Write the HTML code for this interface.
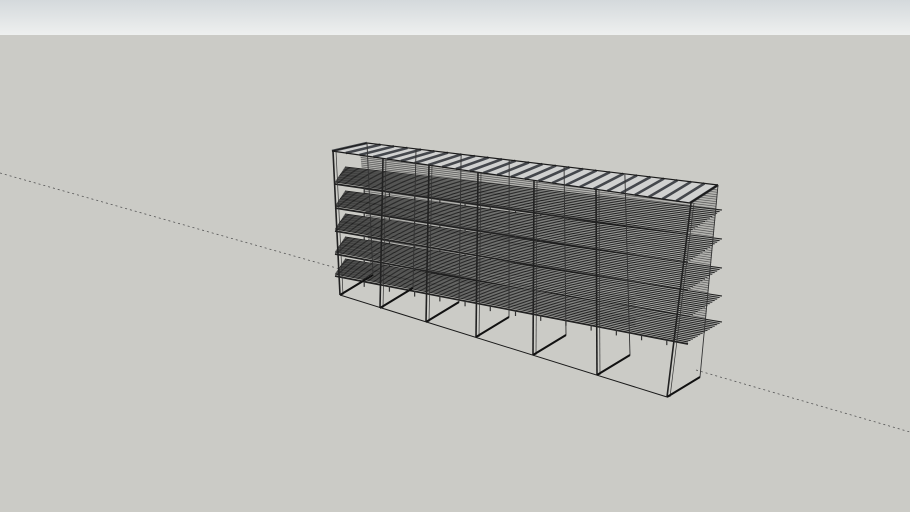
<!DOCTYPE html>
<html><head><meta charset="utf-8"><style>
html,body{margin:0;padding:0;width:910px;height:512px;overflow:hidden;background:#cbcbc6}
svg{display:block}
</style></head><body>
<svg id="s" width="910" height="512" viewBox="0 0 910 512" xmlns="http://www.w3.org/2000/svg">
<defs><linearGradient id="sky" x1="0" y1="0" x2="0" y2="1"><stop offset="0" stop-color="#d4d9dc"/><stop offset="1" stop-color="#eef0ef"/></linearGradient></defs>
<rect x="0" y="0" width="910" height="35" fill="url(#sky)"/>
<rect x="0" y="35" width="910" height="477" fill="#cbcbc6"/>
<line x1="0" y1="173" x2="340" y2="269" stroke="#555" stroke-width="0.8" stroke-dasharray="2,3"/>
<line x1="696" y1="370" x2="910" y2="432" stroke="#555" stroke-width="0.8" stroke-dasharray="2,3"/>
<g id="g" fill="none" stroke="#1a1a1a" stroke-width="0.8"></g>
</svg>
<script>
var g=document.getElementById('g'),NS='http://www.w3.org/2000/svg';
function L(x1,y1,x2,y2,w,c){var e=document.createElementNS(NS,'line');e.setAttribute('x1',x1);e.setAttribute('y1',y1);e.setAttribute('x2',x2);e.setAttribute('y2',y2);if(w)e.setAttribute('stroke-width',w);if(c)e.setAttribute('stroke',c);g.appendChild(e);}
function P(pts,f){var e=document.createElementNS(NS,'polygon');e.setAttribute('points',pts);e.setAttribute('fill',f);e.setAttribute('stroke','none');g.appendChild(e);}
function lerp(a,b,t){return a+(b-a)*t}
P("360,150 718,190 705,330 370,262","#b4b4b0");
for(var i=0;i<=60;i++){var t=i/60;L(lerp(360,370,t),lerp(150,262,t),lerp(718,705,t),lerp(190,330,t),0.7,'#555');}
P("332,151 367,143 718,185 690,203","#d0d1d0");
for(var i=0;i<=26;i++){var t=i/26;var fx=lerp(332,690,t),fy=lerp(151,203,t),bx=lerp(367,718,t),by=lerp(143,185,t);L(fx,fy,bx,by,2.6,'#44474c');}
L(332,151,690,203,1.2);L(367,143,718,185,1.2);L(332,151,367,143,1);L(690,203,718,185,1.8);
var shelves=[[176,168,233,214],[200,192,262,243],[223,215,290,272],[246,238,318,300],[268,258,342,326]];
shelves.forEach(function(s){
 var flx=335,fly=s[0]+6,frx=688,fry=s[2],blx=345,bly=s[0]-9,brx=722,bry=s[3]-4;
 P(flx+","+fly+" "+blx+","+bly+" "+brx+","+bry+" "+frx+","+fry,"#a9aaa7");
 for(var i=0;i<=14;i++){var t=i/14;L(lerp(flx,blx,t),lerp(fly,bly,t),lerp(frx,brx,t),lerp(fry,bry,t),0.9,'#1c1c1c');}
 L(flx,fly+2,frx,fry+2,1.8,'#222');
 for(var k=1;k<14;k++){var t=k/14;var x=lerp(flx,frx,t)+4,y=lerp(fly,fry,t)+2;L(x,y,x,y+6,1.2,'#333');}
});
var fb=[[340,295],[380,308],[426,322],[476,337],[533,355],[597,375],[667,397]];
var tops=[332,382,428,477,533,595,690];
fb.forEach(function(p,i){var tx=tops[i];var t=(tx-332)/(690-332);var ty=lerp(151,203,t);
 L(tx+1,ty,p[0],p[1],1.6,'#222');L(tx+4,ty,p[0]+3,p[1],0.7,'#333');
 var bx=p[0]+33,by=p[1]-20;var btx=lerp(367,718,t),bty=lerp(143,185,t);
 L(btx,bty,bx,by,0.9,'#333');L(p[0],p[1],bx,by,2,'#111');});
L(340,295,667,397,1);
</script>
</body></html>
